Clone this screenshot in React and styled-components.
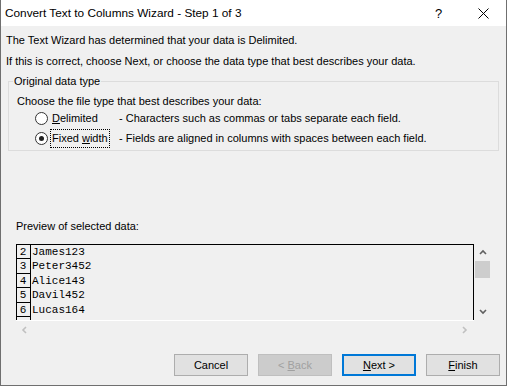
import React from "react";
import styled, { createGlobalStyle } from "styled-components";

const GlobalStyle = createGlobalStyle`
  html, body {
    margin: 0;
    padding: 0;
    background: #f0f0f0;
  }
  * {
    box-sizing: border-box;
  }
`;

const UI_FONT = `"Liberation Sans", Arial, sans-serif`;
const MONO_FONT = `"Liberation Mono", "Courier New", monospace`;

const Window = styled.div`
  width: 507px;
  height: 386px;
  display: flex;
  flex-direction: column;
  background: #f0f0f0;
  border: 1px solid #6f6f6f;
  border-top: none;
  font-family: ${UI_FONT};
  font-size: 11px;
  color: #000;
`;

const TitleBar = styled.div`
  height: 26px;
  flex: none;
  display: flex;
  align-items: center;
  background: #fff;
  padding-left: 4px;
`;

const Title = styled.div`
  flex: 1;
  font-size: 11.8px;
`;

const TitleButton = styled.div`
  width: 45px;
  height: 26px;
  display: flex;
  align-items: center;
  justify-content: center;
  font-size: 13px;
`;

const Intro = styled.div`
  margin-top: 4px;
  padding-left: 5px;
  line-height: 21px;
`;

const Group = styled.fieldset`
  margin: 2px 7px 0;
  padding: 5px 4px 2px;
  border: 1px solid #dcdcdc;
  min-width: 0;
`;

const Legend = styled.legend`
  padding: 0 1px;
  line-height: 15px;
`;

const Prompt = styled.div`
  padding-left: 4px;
  line-height: 14px;
`;

const RadioRow = styled.div`
  display: flex;
  align-items: center;
  height: 20px;
  padding-left: 22px;
`;

const RadioCircle = styled.span`
  width: 13px;
  height: 13px;
  flex: none;
  border-radius: 50%;
  border: 1px solid #333;
  background: #fff;
  display: flex;
  align-items: center;
  justify-content: center;

  &::after {
    content: "";
    width: 5px;
    height: 5px;
    border-radius: 50%;
    background: #222;
    display: ${(p) => (p.$checked ? "block" : "none")};
  }
`;

const RadioLabel = styled.span`
  margin-left: 2px;
  width: 69px;
  flex: none;
  display: flex;
`;

const LabelText = styled.span`
  padding: 1px 1px;
  line-height: 15px;
  border: 1px dotted ${(p) => (p.$focus ? "#000" : "transparent")};
`;

const Desc = styled.span`
  white-space: nowrap;
`;

const PreviewLabel = styled.div`
  margin-top: 67px;
  padding-left: 15px;
  line-height: 16px;
`;

const Preview = styled.div`
  margin: 10px 0 0 15px;
  display: grid;
  grid-template-columns: 458px 17px;
  grid-template-rows: 76px 18px;
  width: 475px;
`;

const DataArea = styled.div`
  border: 1px solid #000;
  border-bottom: none;
  overflow: hidden;
  background: #f0f0f0;
`;

const DataRow = styled.div`
  display: flex;
  height: 14.4px;
  font-family: ${MONO_FONT};
  font-size: 11px;
  line-height: 14px;
`;

const LineNo = styled.span`
  width: 14px;
  flex: none;
  border-right: 1px solid #000;
  border-bottom: 1px solid #000;
  text-align: center;
  padding-right: 1px;
`;

const Cell = styled.span`
  padding-left: 1px;
  white-space: pre;
`;

const VScroll = styled.div`
  display: flex;
  flex-direction: column;
  align-items: center;
  padding: 5px 1px 4px;
`;

const Thumb = styled.div`
  width: 15px;
  height: 17px;
  background: #cdcdcd;
  margin-top: 4px;
`;

const HScroll = styled.div`
  grid-column: 1 / 2;
  border-top: 1px solid #fff;
  display: flex;
  align-items: center;
  justify-content: space-between;
  padding: 0 5px;
`;

const Spacer = styled.div`
  flex: 1;
`;

const Buttons = styled.div`
  margin-top: auto;
  display: flex;
  justify-content: flex-end;
  gap: 10px;
  padding: 0 6px 9px 0;
`;

const Button = styled.button`
  width: 74px;
  height: 22px;
  font-family: ${UI_FONT};
  font-size: 11px;
  color: ${(p) => (p.disabled ? "#a0a0a0" : "#000")};
  background: ${(p) => (p.disabled ? "#cccccc" : "#e1e1e1")};
  border: ${(p) =>
    p.$default ? "2px solid #0078d7" : p.disabled ? "1px solid #bfbfbf" : "1px solid #adadad"};
  padding: 0;
  border-radius: 0;
  text-align: center;
`;

const Chevron = ({ dir, color }) => {
  const paths = {
    up: "M1 5 L4 2 L7 5",
    down: "M1 2 L4 5 L7 2",
    left: "M5 1 L2 4 L5 7",
    right: "M2 1 L5 4 L2 7",
  };
  return (
    <svg width="8" height="8" viewBox="0 0 8 8">
      <path d={paths[dir]} fill="none" stroke={color} strokeWidth="1.6" />
    </svg>
  );
};

const rows = [
  ["2", "James123"],
  ["3", "Peter3452"],
  ["4", "Alice143"],
  ["5", "Davil452"],
  ["6", "Lucas164"],
  ["", ""],
];

export default function App() {
  return (
    <>
      <GlobalStyle />
      <Window>
        <TitleBar>
          <Title>Convert Text to Columns Wizard - Step 1 of 3</Title>
          <TitleButton>?</TitleButton>
          <TitleButton>
            <svg width="11" height="11" viewBox="0 0 11 11">
              <path d="M0.5 0.5 L10.5 10.5 M10.5 0.5 L0.5 10.5" stroke="#000" strokeWidth="1" />
            </svg>
          </TitleButton>
        </TitleBar>

        <Intro>
          <div>The Text Wizard has determined that your data is Delimited.</div>
          <div>If this is correct, choose Next, or choose the data type that best describes your data.</div>
        </Intro>

        <Group>
          <Legend>Original data type</Legend>
          <Prompt>Choose the file type that best describes your data:</Prompt>
          <RadioRow>
            <RadioCircle />
            <RadioLabel>
              <LabelText>
                <u>D</u>elimited
              </LabelText>
            </RadioLabel>
            <Desc>- Characters such as commas or tabs separate each field.</Desc>
          </RadioRow>
          <RadioRow>
            <RadioCircle $checked />
            <RadioLabel>
              <LabelText $focus>
                Fixed <u>w</u>idth
              </LabelText>
            </RadioLabel>
            <Desc>- Fields are aligned in columns with spaces between each field.</Desc>
          </RadioRow>
        </Group>

        <PreviewLabel>Preview of selected data:</PreviewLabel>
        <Preview>
          <DataArea>
            {rows.map(([n, v], i) => (
              <DataRow key={i}>
                <LineNo>{n}</LineNo>
                <Cell>{v}</Cell>
              </DataRow>
            ))}
          </DataArea>
          <VScroll>
            <Chevron dir="up" color="#606060" />
            <Thumb />
            <Spacer />
            <Chevron dir="down" color="#606060" />
          </VScroll>
          <HScroll>
            <Chevron dir="left" color="#c0c0c0" />
            <Chevron dir="right" color="#c0c0c0" />
          </HScroll>
        </Preview>

        <Buttons>
          <Button>Cancel</Button>
          <Button disabled>
            &lt; <u>B</u>ack
          </Button>
          <Button $default>
            <u>N</u>ext &gt;
          </Button>
          <Button>
            <u>F</u>inish
          </Button>
        </Buttons>
      </Window>
    </>
  );
}
